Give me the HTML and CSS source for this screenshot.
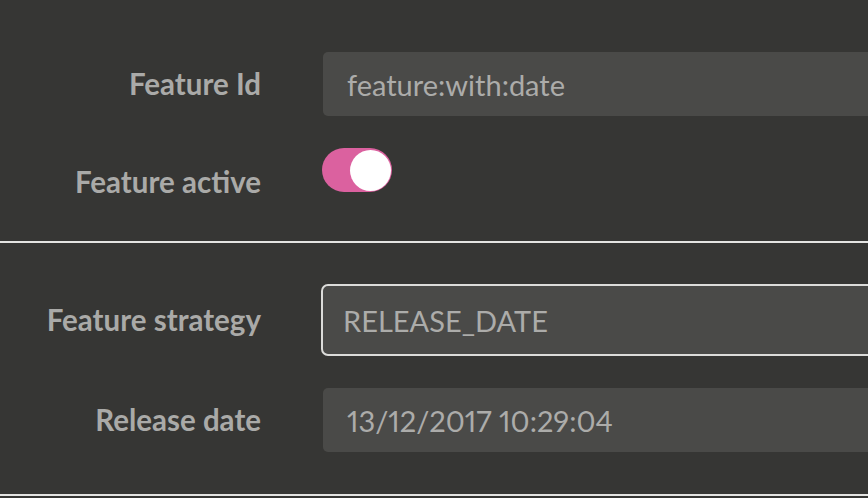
FILE: index.html
```html
<!DOCTYPE html>
<html lang="en">
<head>
<meta charset="utf-8">
<title>Feature</title>
<link rel="stylesheet" href="styles.css">
</head>
<body>
<main class="form">
  <section class="group group-first">
    <div class="row">
      <label class="label">Feature Id</label>
      <div class="field">feature:with:date</div>
    </div>
    <div class="row row-toggle">
      <label class="label">Feature active</label>
      <div class="toggle"><span class="knob"></span></div>
    </div>
  </section>
  <section class="group group-second">
    <div class="row">
      <label class="label">Feature strategy</label>
      <div class="field select">RELEASE_DATE</div>
    </div>
    <div class="row">
      <label class="label">Release date</label>
      <div class="field">13/12/2017 10:29:04</div>
    </div>
  </section>
</main>
</body>
</html>
```
FILE: styles.css
```css
html, body {
  margin: 0;
  padding: 0;
  background: #363634;
  overflow: hidden;
}
body {
  width: 868px;
  height: 498px;
  font-family: Lato, "Open Sans", sans-serif;
}
.form {
  width: 960px;
}
.group {
  display: flex;
  flex-direction: column;
  gap: 32px;
  border-bottom: 2px solid #e4e4e2;
}
.group-first {
  padding: 52px 0 29px;
}
.group-second {
  padding: 41px 0 42px;
}
.row {
  display: grid;
  grid-template-columns: 261px 1fr;
  column-gap: 62px;
  align-items: center;
}
.label {
  text-align: right;
  color: #aaaaa8;
  font-weight: 700;
  font-size: 29.5px;
  line-height: 36px;
}
.field {
  height: 64px;
  box-sizing: border-box;
  padding-left: 24px;
  display: flex;
  align-items: center;
  background: #4a4a48;
  border-radius: 5px;
  color: #acacaa;
  font-size: 29px;
  font-variant-numeric: proportional-nums;
}
.field.select {
  height: 72px;
  margin-left: -2px;
  padding-left: 20px;
  border: 2px solid #dcdcda;
  border-radius: 7px;
}
.row-toggle {
  align-items: start;
  min-height: 64px;
}
.row-toggle .label {
  padding-top: 16px;
}
.toggle {
  width: 70px;
  height: 44px;
  margin-left: -1px;
  border-radius: 22px;
  background: #db619f;
  display: flex;
  align-items: center;
  justify-content: flex-end;
  padding: 0 1px;
  box-sizing: border-box;
}
.knob {
  width: 41px;
  height: 41px;
  border-radius: 50%;
  background: #ffffff;
}
```
